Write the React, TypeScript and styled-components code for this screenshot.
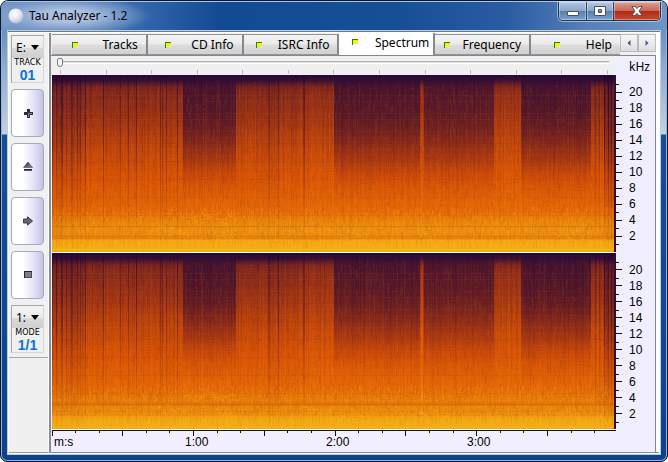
import React, { useMemo, useState } from "react";
import styled, { createGlobalStyle, css } from "styled-components";

const GlobalStyle = createGlobalStyle`
  *, *::before, *::after { box-sizing: border-box; }
  body { margin: 0; background: #fff; font-family: "Noto Sans", sans-serif; font-size: 12px; color: #000; }
  button, select, input { font: inherit; color: inherit; margin: 0; }
`;

/* ---------- window frame ---------- */

const Frame = styled.div`
  display: flex;
  flex-direction: column;
  height: 100vh;
  min-height: 400px;
  padding: 0 6px 6px;
  border: 1px solid #06142c;
  border-radius: 8px 8px 7px 7px;
  box-shadow: inset 0 0 0 1px #8fb4dc;
  background: linear-gradient(180deg, #4d78b4 0, #8ba6cf 60px, #c3cfe4 133px, #164e96 134px, #0e438c 100%);
  overflow: hidden;
`;

const TitleBar = styled.header`
  display: flex;
  align-items: flex-start;
  height: 29px;
  flex: none;
  margin: 0 -6px;
  padding: 0 6px;
  border-top: 1px solid #a9c6e8;
  background:
    radial-gradient(ellipse 84px 20px at 66px 14px, rgba(176, 196, 226, 0.95) 30%, rgba(140, 168, 210, 0.6) 70%, transparent 100%),
    linear-gradient(90deg, #7295c6 0, #2f62a8 150px, #124a93 220px, #174f97 60%, #2a5ca2 76%, #5680b8 88%, #6f95c4 100%);
`;

const Caption = styled.h1`
  display: flex;
  align-items: center;
  gap: 5px;
  height: 27px;
  margin: 0;
  padding-left: 1px;
  flex: 1;
  font-size: 12px;
  font-weight: 400;
`;

const CaptionButtons = styled.div`
  display: flex;
  height: 19px;
  border: 1px solid #24364f;
  border-top: 0;
  border-radius: 0 0 5px 5px;
  overflow: hidden;
  box-shadow: 0 0 0 1px rgba(210, 226, 245, 0.6);
`;

const CaptionButton = styled.button<{ $close?: boolean }>`
  display: grid;
  place-items: center;
  width: ${(p) => (p.$close ? 47 : 27)}px;
  padding: 0;
  border: 0;
  border-left: 1px solid #2b4468;
  background: ${(p) =>
    p.$close
      ? "linear-gradient(180deg, #d8a095 0, #c8685a 48%, #ad2b17 50%, #c84930 100%)"
      : "linear-gradient(180deg, #b4c7df 0, #8ba8cc 48%, #557eae 50%, #7ca2cc 100%)"};
  box-shadow: inset 0 0 0 1px rgba(255, 255, 255, 0.35);
  &:first-child { border-left: 0; }
`;

const Client = styled.main`
  display: flex;
  flex: 1;
  min-height: 0;
  border: 1px solid #5f7381;
  outline: 1px solid #b7cfe4;
  outline-offset: -1px;
  border-top: 2px solid #6e7c80;
  padding: 1px;
  background: #fff;
`;

/* ---------- sidebar ---------- */

const Sidebar = styled.aside`
  display: flex;
  flex-direction: column;
  width: 40px;
  flex: none;
  background: #f0f0f0;
  border-right: 1px solid #fff;
  border-bottom: 1px solid #9a9a9a;
`;

const Controls = styled.div`
  display: flex;
  flex-direction: column;
  gap: 6px;
  padding: 2px 4px 4px 2px;
  border-bottom: 1px solid #a8a8a8;
`;

const Readout = styled.div`
  display: flex;
  flex-direction: column;
  align-items: center;
  height: 48px;
  padding-top: 1px;
  border: 1px solid #d6d6d6;
  border-top-color: #a8a8a8;
  border-left-color: #a8a8a8;
  background: #f0f0f0;
`;

const Picker = styled.select`
  appearance: none;
  width: 100%;
  height: 21px;
  padding: 0 0 0 4px;
  border: 0;
  border-radius: 0;
  background:
    url("data:image/svg+xml,%3Csvg xmlns='http://www.w3.org/2000/svg' width='8' height='5'%3E%3Cpath d='M0 0h8L4 5z'/%3E%3C/svg%3E") no-repeat right 4px center,
    linear-gradient(180deg, #f4f4f4 0, #ebebeb 50%, #dadada 52%, #cfcfcf 100%);
  font-family: "Noto Sans", sans-serif;
  font-size: 12px;
`;

const ReadoutLabel = styled.span`
  font: 8px/10px "DejaVu Sans", sans-serif;
`;

const ReadoutValue = styled.output`
  font: 700 14px/14px "Liberation Sans", sans-serif;
  color: #0b70dc;
`;

const ToolButton = styled.button`
  display: grid;
  place-items: center;
  height: 48px;
  padding: 0;
  border: 1px solid #a3abc0;
  border-radius: 4px;
  background: linear-gradient(90deg, #fff 0, #fff 35%, #e3e3f7 70%, #c3c3e4 100%);
`;

/* ---------- notebook ---------- */

const Notebook = styled.section`
  display: flex;
  flex-direction: column;
  flex: 1;
  min-width: 0;
  border-left: 2px solid #8a8f94;
  border-bottom: 1px solid #8a8f94;
  padding-right: 3px;
  background: #fff;
`;

const TabRow = styled.div`
  display: flex;
  align-items: flex-end;
  height: 22px;
  flex: none;
  padding-left: 1px;
  background: #f0f0f0;
`;

const Tabs = styled.div`
  display: grid;
  grid-template-columns: repeat(5, minmax(0, 96fr)) minmax(0, 89fr);
  align-items: end;
  flex: 1;
  min-width: 0;
  height: 22px;
`;

const TabMarkIcon = styled.svg`
  flex: none;
  margin: 0 auto;
`;

const TabLabel = styled.span`
  padding-left: 4px;
`;

const Tab = styled.button<{ $active: boolean }>`
  display: flex;
  align-items: center;
  height: 21px;
  padding: 0 8px 0 0;
  border: 1px solid #90959b;
  border-width: 1px 2px 1px 0;
  border-right-color: #83888e;
  background: linear-gradient(180deg, #f3f3f3 0, #ebebeb 48%, #dddddd 52%, #d0d0d0 100%);
  white-space: nowrap;
  &:last-child { border-right: 0; }
  ${(p) =>
    p.$active &&
    css`
      height: 22px;
      padding: 0 4px 4px 0;
      border-width: 0 2px 0 0;
      background: #fff;
    `}
`;

const TabScroll = styled.button`
  display: grid;
  place-items: center;
  width: 18px;
  height: 18px;
  margin-bottom: 3px;
  padding: 0;
  border: 1px solid #b9bcc2;
  background: linear-gradient(180deg, #f6f6f6 0, #ececec 50%, #dcdce0 100%);
`;

const Page = styled.div`
  display: grid;
  grid-template-columns: minmax(0, 1fr) 39px;
  grid-template-rows: 19px minmax(0, 1fr) minmax(0, 1fr) 22px;
  flex: 1;
  min-height: 0;
  padding-left: 1px;
  border-top: 1px solid #83888e;
  border-right: 1px solid #83888e;
  background: #f0eeff;
`;

const Seek = styled.div`
  display: flex;
  flex-direction: column;
  padding: 2px 7px 0 5px;
  background: #f0f0f0;
`;

const Range = styled.input`
  appearance: none;
  display: block;
  width: 100%;
  height: 9px;
  background: transparent;
  &::-webkit-slider-runnable-track {
    height: 3px;
    border-top: 1px solid #b0b0b0;
    background: #e4e4e4;
    border-bottom: 1px solid #fff;
  }
  &::-webkit-slider-thumb {
    appearance: none;
    width: 6px;
    height: 9px;
    margin-top: -4px;
    border: 1px solid #7b7b7b;
    border-radius: 2px 2px 3px 3px;
    background: #f4f4f4;
  }
`;

const SeekTicks = styled.div`
  display: flex;
  justify-content: space-between;
  height: 4px;
  margin: 3px 1px 0 3px;
`;

const SeekTick = styled.i`
  width: 1px;
  background: #bcbcbc;
`;

const Unit = styled.div`
  padding: 2px 0 0 13px;
  font-size: 12px;
  line-height: 17px;
`;

const Plot = styled.svg`
  display: block;
  width: 100%;
  height: 100%;
  border-bottom: 1px solid #fff;
  background: #e05a08;
`;

const FrequencyAxis = styled.div`
  display: flex;
  flex-direction: column;
`;

const AxisGap = styled.div`
  flex: 1 1 1px;
`;

const AxisCell = styled.div`
  display: flex;
  align-items: center;
  gap: 7px;
  flex: 2 1 0;
  min-height: 0;
  background: linear-gradient(#111, #111) left top / 3px 1px no-repeat;
  font: 12px/12px "Liberation Sans", sans-serif;
  &::before { content: ""; width: 6px; height: 1px; background: #111; }
`;

const AxisEnd = styled.div`
  flex: 1 1 0;
  background: linear-gradient(#111, #111) left top / 3px 1px no-repeat;
`;

const TimeAxis = styled.div`
  display: flex;
  flex-direction: column;
  border-top: 1px solid #111;
`;

const TimeTicks = styled.svg`
  display: block;
  width: 100%;
  height: 5px;
`;

const TimeLabels = styled.div`
  display: grid;
  grid-template-columns: 131fr 141fr 141fr 149fr;
  padding-left: 2px;
  font: 12px/13px "Liberation Sans", sans-serif;
`;

/* ---------- icons ---------- */

const AppIcon = () => (
  <svg width="16" height="16" viewBox="0 0 16 16" aria-hidden="true">
    <defs>
      <radialGradient id="orb" cx="0.4" cy="0.35" r="0.65">
        <stop offset="0" stopColor="#fff" />
        <stop offset="0.55" stopColor="#e8e8f3" />
        <stop offset="1" stopColor="#b4b8d4" />
      </radialGradient>
    </defs>
    <circle cx="8" cy="8" r="7.5" fill="url(#orb)" />
  </svg>
);

const TabMark = () => (
  <TabMarkIcon width="6" height="6" viewBox="0 0 6 6" shapeRendering="crispEdges" aria-hidden="true">
    <path d="M1 1h5v4h-5z" fill="#ffef00" />
    <path d="M5 3h1v3h-1z" fill="#e4e4e4" />
    <path d="M0 0h6v1h-5v5h-1z" fill="#128a12" />
  </TabMarkIcon>
);

const Glyph = ({ children }: { children: React.ReactNode }) => (
  <svg width="10" height="10" viewBox="0 0 10 10" aria-hidden="true">
    <defs>
      <linearGradient id="steel" x1="0" y1="0" x2="1" y2="1">
        <stop offset="0" stopColor="#20202c" />
        <stop offset="1" stopColor="#96969a" />
      </linearGradient>
    </defs>
    {children}
  </svg>
);

const tools: { name: string; icon: React.ReactNode }[] = [
  {
    name: "Add",
    icon: (
      <Glyph>
        <path d="M4 1h3v3h3v3H7v3H4V7H1V4h3z" fill="#2c2c3a" />
        <path d="M5 5h4v1H6v3H5z" fill="#85858c" />
      </Glyph>
    ),
  },
  {
    name: "Eject",
    icon: (
      <Glyph>
        <path d="M5 0L9.500 5.500H.5z" fill="url(#steel)" stroke="#30303c" strokeWidth="0.5" />
        <path d="M1 7h8v2H1z" fill="#55555e" />
        <path d="M1 7h8v1H1z" fill="#252530" />
      </Glyph>
    ),
  },
  {
    name: "Next",
    icon: (
      <Glyph>
        <path d="M.5 3h4V.8L9.500 5 4.500 9.200V7h-4z" fill="#66666c" stroke="#343440" strokeWidth="0.9" />
      </Glyph>
    ),
  },
  {
    name: "Stop",
    icon: (
      <Glyph>
        <path d="M1 1h8v7H1z" fill="#7e7e82" />
        <path d="M1 1h8v1H2v6H1z" fill="#25253a" />
        <path d="M8 2h1v6H2V7h6z" fill="#4c4c58" />
      </Glyph>
    ),
  },
];

/* ---------- spectrogram ---------- */

const W = 564;
const H = 176;

const random = (seed: number) => () => {
  seed = (seed + 0x6d2b79f5) | 0;
  let t = Math.imul(seed ^ (seed >>> 15), 1 | seed);
  t = (t + Math.imul(t ^ (t >>> 7), 61 | t)) ^ t;
  return ((t ^ (t >>> 14)) >>> 0) / 4294967296;
};

const quiet: [number, number, number][] = [
  [131, 184, 1],
  [282, 368, 0.94],
  [372, 442, 0.86],
  [469, 539, 1],
];
const beats = [0, 4, 9, 10, 14, 19, 20, 25, 28, 33, 51, 68, 76, 84, 108, 110, 114, 125, 216, 217, 226, 251, 252, 543, 547, 552, 556, 559];
const isQuiet = (x: number) => quiet.some(([a, b]) => x >= a && x < b);

function Spectrogram({ channel }: { channel: number }) {
  const { columns, grains, waves } = useMemo(() => {
    const rnd = random(71 + channel);
    const columns = Array.from({ length: W }, (_, x) => {
      const base = isQuiet(x) ? 0.02 : x < 34 ? 0.2 : x >= 552 ? 0.4 : 0.06;
      const beat = beats.includes(x) ? 0.4 : 0;
      return { x, shade: base + beat + rnd() ** 2 * 0.2, glow: rnd() ** 3 * 0.2 };
    });
    const grains: Record<string, string> = { light: "", dark: "", gold: "" };
    for (let i = 0; i < 7000; i++) {
      const x = Math.floor(rnd() * W);
      const y = Math.floor(8 + rnd() * (H - 16));
      const key = rnd() > 0.5 ? "light" : "dark";
      grains[key] += rnd() > 0.3 ? `M${x} ${y}h1v7h-1z` : `M${x} ${y}h4v1h-4z`;
    }
    for (let i = 0; i < 1900; i++) {
      const x = Math.floor(rnd() * W);
      const y = Math.floor(H - 6 - rnd() ** 1.4 * 38);
      grains.gold += `M${x} ${y}h1v${2 + Math.floor(rnd() * 4)}h-1z`;
    }
    let waves = "";
    for (const [a, b, y] of [[104, 130, 150], [131, 182, 138], [164, 182, 155], [366, 384, 154], [250, 278, 150], [288, 314, 156], [504, 538, 154]]) {
      for (let x = a; x < b; x += 5) {
        const dy = Math.floor(rnd() * 6);
        waves += `M${x} ${y + dy}q2 4 4 ${rnd() > 0.5 ? 1 : -1}M${x + 1} ${y + dy + 4}l4 ${rnd() > 0.5 ? 2 : -2}`;
      }
    }
    return { columns, grains, waves };
  }, [channel]);

  const id = (name: string) => `${name}${channel}`;

  return (
    <Plot viewBox={`0 0 ${W} ${H}`} preserveAspectRatio="none" role="img" aria-label={`Spectrum of channel ${channel + 1}`}>
      <defs>
        <linearGradient id={id("loud")} x1="0" y1="0" x2="0" y2="1">
          <stop offset="0" stopColor="#250a38" />
          <stop offset="0.03" stopColor="#340e36" />
          <stop offset="0.07" stopColor="#82271e" />
          <stop offset="0.1" stopColor="#8c2d1c" />
          <stop offset="0.25" stopColor="#a83812" />
          <stop offset="0.4" stopColor="#ca4a09" />
          <stop offset="0.58" stopColor="#e05804" />
          <stop offset="0.78" stopColor="#e76c06" />
          <stop offset="0.86" stopColor="#e97e08" />
          <stop offset="0.93" stopColor="#ea8c0c" />
          <stop offset="0.94" stopColor="#ee9a10" />
          <stop offset="1" stopColor="#f1aa12" />
        </linearGradient>
        <linearGradient id={id("quiet")} x1="0" y1="0" x2="0" y2="1">
          <stop offset="0" stopColor="#250a38" />
          <stop offset="0.07" stopColor="#461330" />
          <stop offset="0.22" stopColor="#50162a" stopOpacity="0.94" />
          <stop offset="0.34" stopColor="#621a24" stopOpacity="0.8" />
          <stop offset="0.47" stopColor="#88241a" stopOpacity="0.58" />
          <stop offset="0.6" stopColor="#b03810" stopOpacity="0.25" />
          <stop offset="0.72" stopColor="#c04010" stopOpacity="0" />
        </linearGradient>
        <linearGradient id={id("streak")} x1="0" y1="0" x2="0" y2="1">
          <stop offset="0" stopColor="#240530" />
          <stop offset="0.4" stopColor="#3c0a28" stopOpacity="0.85" />
          <stop offset="0.75" stopColor="#801c10" stopOpacity="0.35" />
          <stop offset="1" stopColor="#a03000" stopOpacity="0.1" />
        </linearGradient>
        <linearGradient id={id("flare")} x1="0" y1="0" x2="0" y2="1">
          <stop offset="0" stopColor="#d04408" stopOpacity="0" />
          <stop offset="0.12" stopColor="#d04408" stopOpacity="0.7" />
          <stop offset="0.6" stopColor="#f06a08" stopOpacity="0.6" />
          <stop offset="1" stopColor="#f8a010" stopOpacity="0.3" />
        </linearGradient>
        <linearGradient id={id("bass")} x1="0" y1="0" x2="0" y2="1">
          <stop offset="0" stopColor="#f3a414" stopOpacity="0" />
          <stop offset="0.35" stopColor="#f3a414" stopOpacity={channel === 0 ? 0.4 : 0.15} />
          <stop offset="1" stopColor="#f3a414" stopOpacity={channel === 0 ? 0.4 : 0.3} />
        </linearGradient>
      </defs>
      <g shapeRendering="crispEdges">
        <rect width={W} height={H} fill={`url(#${id("loud")})`} />
        <rect y="136" width={W} height={H - 136} fill={`url(#${id("bass")})`} />
        {quiet.map(([a, b, depth]) => (
          <rect key={a} x={a} width={b - a} height={H} fill={`url(#${id("quiet")})`} opacity={depth} />
        ))}
        <rect x="246" width="36" height="170" fill={`url(#${id("flare")})`} opacity="0.25" />
        <rect x="442" width="27" height="170" fill={`url(#${id("flare")})`} opacity="0.35" />
        <rect x="369" y="2" width="2" height="160" fill={`url(#${id("flare")})`} />
        {columns.map(({ x, shade, glow }) => (
          <React.Fragment key={x}>
            <rect x={x} width="1" height={H} fill={`url(#${id("streak")})`} opacity={shade} />
            <rect x={x} width="1" height={H} fill={`url(#${id("flare")})`} opacity={glow} />
          </React.Fragment>
        ))}
        <path d={grains.dark} fill="#4a1018" opacity="0.07" />
        <path d={grains.light} fill="#ff7a08" opacity="0.07" />
        <path d={grains.gold} fill="#ffc61c" opacity="0.16" />
        {Array.from({ length: 27 }, (_, i) => (
          <rect key={i} y={14 + i * 6} width={W} height="1" fill={i % 3 ? "#ff8b10" : "#501018"} opacity="0.05" />
        ))}
        <rect y="151" width={W} height="1" fill="#c84c04" opacity="0.3" />
        <rect y={channel === 0 ? 160 : 149} width={W} height="4" fill="#d05804" opacity="0.3" />
        <rect y={channel === 0 ? 165 : 163} width={W} height="11" fill="#ffc21a" opacity="0.25" />
        <rect y={H - 2} width={W} height="1" fill="#ffc818" opacity="0.5" />
        <rect x={W - 2} width="2" height={H} fill="#301030" />
      </g>
      <path d={waves} fill="none" stroke="#ffb020" strokeWidth="1" opacity="0.35" />
    </Plot>
  );
}

/* ---------- page ---------- */

const tabs = ["Tracks", "CD Info", "ISRC Info", "Spectrum", "Frequency", "Help"];
const frequencies = [20, 18, 16, 14, 12, 10, 8, 6, 4, 2];
const secondsShown = 239;

const Frequencies = () => (
  <FrequencyAxis>
    <AxisGap />
    {frequencies.map((f) => (
      <AxisCell key={f}>{f}</AxisCell>
    ))}
    <AxisEnd />
  </FrequencyAxis>
);

export default function App() {
  const [active, setActive] = useState("Spectrum");
  return (
    <>
      <GlobalStyle />
      <Frame>
        <TitleBar>
          <Caption>
            <AppIcon />
            Tau Analyzer - 1.2
          </Caption>
          <CaptionButtons>
            <CaptionButton aria-label="Minimize">
              <svg width="12" height="12" viewBox="0 0 12 12">
                <rect x="0.500" y="6.500" width="11" height="4" rx="0.500" fill="#fff" stroke="#4a5262" />
              </svg>
            </CaptionButton>
            <CaptionButton aria-label="Maximize">
              <svg width="12" height="12" viewBox="0 0 12 12">
                <path fillRule="evenodd" d="M.5 1.500h11v9H.5zM4.500 4.500v3h3v-3z" fill="#fff" stroke="#4a5262" />
              </svg>
            </CaptionButton>
            <CaptionButton $close aria-label="Close">
              <svg width="12" height="12" viewBox="0 0 12 12">
                <path d="M.8 1.500h3.400L6 3.600l1.800-2.100h3.400L8 6l3.200 4.500H7.800L6 8.400l-1.800 2.100H.8L4 6z" fill="#fff" stroke="#5a4048" strokeWidth="0.9" />
              </svg>
            </CaptionButton>
          </CaptionButtons>
        </TitleBar>
        <Client>
          <Sidebar>
            <Controls>
              <Readout>
                <Picker aria-label="Drive">
                  <option>E:</option>
                </Picker>
                <ReadoutLabel>TRACK</ReadoutLabel>
                <ReadoutValue>01</ReadoutValue>
              </Readout>
              {tools.map((t) => (
                <ToolButton key={t.name} aria-label={t.name}>
                  {t.icon}
                </ToolButton>
              ))}
              <Readout>
                <Picker aria-label="Mode">
                  <option>1:</option>
                </Picker>
                <ReadoutLabel>MODE</ReadoutLabel>
                <ReadoutValue>1/1</ReadoutValue>
              </Readout>
            </Controls>
          </Sidebar>
          <Notebook>
            <TabRow>
              <Tabs role="tablist">
                {tabs.map((t) => (
                  <Tab key={t} role="tab" aria-selected={t === active} $active={t === active} onClick={() => setActive(t)}>
                    <TabMark />
                    <TabLabel>{t}</TabLabel>
                  </Tab>
                ))}
              </Tabs>
              <TabScroll aria-label="Scroll tabs left">
                <svg width="4" height="6" viewBox="0 0 4 6"><path d="M3.500 0v6L.5 3z" fill="#48508c" /></svg>
              </TabScroll>
              <TabScroll aria-label="Scroll tabs right">
                <svg width="4" height="6" viewBox="0 0 4 6"><path d="M.5 0v6l3-3z" fill="#4858c0" /></svg>
              </TabScroll>
            </TabRow>
            <Page role="tabpanel">
              <Seek>
                <Range type="range" min="0" max="12" step="any" defaultValue="0" aria-label="Position" />
                <SeekTicks>
                  {Array.from({ length: 13 }, (_, i) => (
                    <SeekTick key={i} />
                  ))}
                </SeekTicks>
              </Seek>
              <Unit>kHz</Unit>
              <Spectrogram channel={0} />
              <Frequencies />
              <Spectrogram channel={1} />
              <Frequencies />
              <TimeAxis>
                <TimeTicks aria-hidden="true">
                  {Array.from({ length: 24 }, (_, i) => {
                    const x = `${((i * 10) / secondsShown) * 100}%`;
                    return (
                      <line key={i} x1={x} x2={x} y1="0" y2={i % 3 ? 2 : 5} stroke="#111" shapeRendering="crispEdges" />
                    );
                  })}
                </TimeTicks>
                <TimeLabels>
                  <span>m:s</span>
                  <span>1:00</span>
                  <span>2:00</span>
                  <span>3:00</span>
                </TimeLabels>
              </TimeAxis>
            </Page>
          </Notebook>
        </Client>
      </Frame>
    </>
  );
}
